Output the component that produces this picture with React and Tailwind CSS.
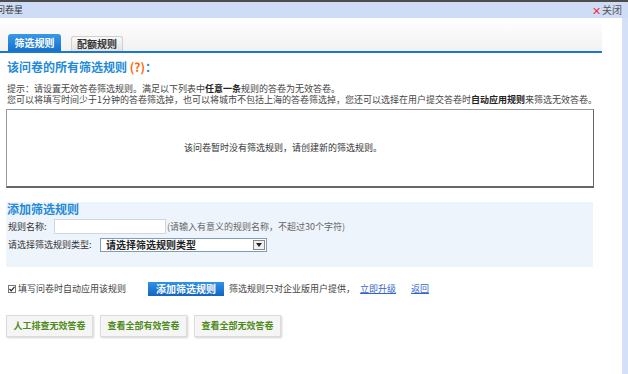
import React from "react";

const F = { fontFamily: '"Noto Sans CJK SC", "Noto Sans", sans-serif' };

export default function App() {
  return (
    <div className="relative w-[628px] h-[374px] overflow-hidden bg-white text-[#333]" style={F}>
      <div className="h-[2px] bg-[#4d4d4d]" />
      <div className="h-[16px] bg-[#cfdcf6] flex items-center justify-between">
        <span className="ml-[-4px] text-[9px] leading-[16px] text-[#333]">问卷星</span>
        <span className="mr-[6px] flex items-center text-[10px] leading-[16px] text-[#555]">
          <span className="text-[#e33] text-[11px] mr-[1px]">✕</span>关闭
        </span>
      </div>
      <div className="flex">
        <div className="w-[622px]">
          {/* tabs */}
          <div className="w-[602px] bg-gradient-to-b from-white to-[#f1f1f1]">
            <div className="flex items-end gap-[10px] pl-[8px] pt-[16px] h-[33px]">
              <div className="w-[53px] h-[17px] rounded-t-[3px] bg-gradient-to-b from-[#3a98e6] to-[#1572cc] text-white font-bold text-[10px] leading-[17px] text-center">
                筛选规则
              </div>
              <div className="w-[52px] h-[15px] rounded-t-[3px] border border-b-0 border-[#cfcfcf] bg-gradient-to-b from-[#fafafa] to-[#e2e2e2] text-[#333] font-bold text-[10px] leading-[14px] text-center">
                配额规则
              </div>
            </div>
            <div className="h-[2px] bg-[#1a78d0]" />
          </div>

          {/* heading */}
          <div className="mt-[7px] ml-[7px] text-[12px] leading-[14px] font-bold text-[#1f8ad8]">
            该问卷的所有筛选规则 <span className="text-[#f60]">(?)</span>：
          </div>
          <div className="mt-[9px] ml-[7px] text-[9px] leading-[11px] text-[#444]">
            <div>
              提示：请设置无效答卷筛选规则。满足以下列表中<b className="text-[#222]">任意一条</b>规则的答卷为无效答卷。
            </div>
            <div>
              您可以将填写时间少于1分钟的答卷筛选掉，也可以将城市不包括上海的答卷筛选掉，您还可以选择在用户提交答卷时<b className="text-[#222]">自动应用规则</b>来筛选无效答卷。
            </div>
          </div>

          {/* empty box */}
          <div className="mt-[4px] ml-[6px] w-[588px] h-[79px] border border-[#9a9a9a] border-r-[#666] border-b-[#666] border-b-2 flex items-center justify-center pr-[34px] text-[9px] text-[#333]">
            该问卷暂时没有筛选规则，请创建新的筛选规则。
          </div>

          {/* add rule section */}
          <div className="mt-[14px] ml-[6px] w-[587px] h-[65px] bg-[#eef4fc]">
            <div className="pl-[1px] text-[12px] leading-[14px] font-bold text-[#1f8ad8]">添加筛选规则</div>
            <div className="mt-[3px] flex items-center pl-[2px] h-[15px] text-[9px]">
              <span className="w-[46px]">规则名称:</span>
              <div className="w-[112px] h-[15px] bg-white border border-[#cfd6e0]" />
              <span className="ml-[1px] text-[#666]">(请输入有意义的规则名称，不超过30个字符)</span>
            </div>
            <div className="mt-[4px] flex items-center pl-[2px] h-[14px] text-[9px]">
              <span className="w-[92px]">请选择筛选规则类型:</span>
              <div className="w-[167px] h-[14px] bg-white border border-[#7f9db9] flex items-center justify-between pl-[5px] pr-[1px]">
                <span className="text-[10px] leading-[12px] font-bold text-[#222]">请选择筛选规则类型</span>
                <span className="w-[12px] h-[10px] border border-[#888] bg-[#f0f0f0] flex items-center justify-center">
                  <svg width="6" height="4" viewBox="0 0 6 4"><path d="M0 0h6L3 4z" fill="#222" /></svg>
                </span>
              </div>
            </div>
          </div>

          {/* action row */}
          <div className="mt-[15px] flex items-center h-[14px] text-[9px]">
            <span className="ml-[8px] w-[8px] h-[8px] border border-[#777] bg-white flex items-center justify-center">
              <svg width="6" height="6" viewBox="0 0 6 6"><path d="M0.5 3l1.7 1.8L5.5 0.8" stroke="#222" strokeWidth="1.2" fill="none" /></svg>
            </span>
            <span className="ml-[2px] text-[#444]">填写问卷时自动应用该规则</span>
            <span className="ml-[22px] w-[76px] h-[14px] bg-gradient-to-b from-[#2f93e6] to-[#1464c0] text-white font-bold text-[10px] leading-[14px] text-center">
              添加筛选规则
            </span>
            <span className="ml-[5px] text-[#444]">筛选规则只对企业版用户提供，</span>
            <span className="ml-[5px] text-[#36c] underline">立即升级</span>
            <span className="ml-[15px] text-[#36c] underline">返回</span>
          </div>

          {/* bottom buttons */}
          <div className="mt-[19px] ml-[6px] flex gap-[7px]">
            {["人工排查无效答卷", "查看全部有效答卷", "查看全部无效答卷"].map((t) => (
              <div
                key={t}
                className="w-[87px] h-[22px] bg-[#f5f5f5] border border-[#dcdcdc] shadow-[1px_1px_2px_rgba(0,0,0,0.18)] text-[9px] leading-[20px] font-bold text-[#4f8a1c] text-center"
              >
                {t}
              </div>
            ))}
          </div>
        </div>
        <div className="w-[6px] h-[356px] bg-[#d3e0f8]" />
      </div>
    </div>
  );
}
